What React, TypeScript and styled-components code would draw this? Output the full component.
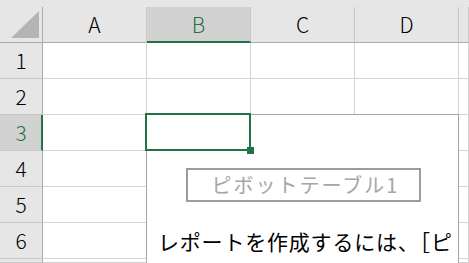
import React from "react";
import styled, { createGlobalStyle } from "styled-components";

const Global = createGlobalStyle`
  html, body { margin: 0; padding: 0; background: #fff; }
  body { font-family: "Noto Sans CJK JP", "Noto Sans", sans-serif; }
`;

const GREEN = "#217346";

const Page = styled.div`
  width: 469px;
  height: 263px;
  overflow: hidden;
  background: #fff;
  display: flex;
  flex-direction: column;
`;

const TopStrip = styled.div`
  height: 7px;
  flex: none;
  background: #e6e6e6;
`;

const Sheet = styled.div`
  flex: 1;
  display: grid;
  grid-template-columns: 43px repeat(4, 104px) 1fr;
  grid-template-rows: repeat(7, 36px) 1fr;
  position: relative;
`;

const Corner = styled.div`
  background: #e6e6e6;
  border-right: 1px solid #ababab;
  border-bottom: 1px solid #ababab;
  box-sizing: border-box;
  svg { display: block; }
`;

const ColHeader = styled.div<{ $sel?: boolean }>`
  box-sizing: border-box;
  background: ${(p) => (p.$sel ? "#d2d2d2" : "#e6e6e6")};
  border-right: 1px solid #c8c8c8;
  border-bottom: ${(p) => (p.$sel ? `2px solid ${GREEN}` : "1px solid #ababab")};
  color: ${(p) => (p.$sel ? GREEN : "#000")};
  font-family: "Noto Sans CJK JP", "Noto Sans", sans-serif;
  font-weight: 300;
  font-size: 21px;
  display: flex;
  align-items: center;
  justify-content: center;
  padding-top: ${(p) => (p.$sel ? "1px" : "0")};
  line-height: 1;
`;

const RowHeader = styled.div<{ $sel?: boolean }>`
  box-sizing: border-box;
  background: ${(p) => (p.$sel ? "#d2d2d2" : "#e6e6e6")};
  border-right: ${(p) => (p.$sel ? `2px solid ${GREEN}` : "1px solid #ababab")};
  border-bottom: 1px solid #c8c8c8;
  color: ${(p) => (p.$sel ? GREEN : "#000")};
  font-family: "Noto Sans CJK JP", "Noto Sans", sans-serif;
  font-weight: 300;
  font-size: 21px;
  display: flex;
  align-items: center;
  justify-content: center;
  padding-left: ${(p) => (p.$sel ? "1px" : "0")};
  line-height: 1;
`;

const Cell = styled.div`
  box-sizing: border-box;
  border-right: 1px solid #d4d4d4;
  border-bottom: 1px solid #d4d4d4;
  background: #fff;
`;

const Pivot = styled.div`
  grid-column: 3 / 6;
  grid-row: 4 / 9;
  margin-left: -1px;
  margin-top: -1px;
  border-left: 1px solid #a6a6a6;
  border-top: 1px solid #a6a6a6;
  border-right: 1px solid #a6a6a6;
  background: #fff;
  z-index: 1;
  overflow: hidden;
  display: flex;
  flex-direction: column;
  align-items: flex-start;
  padding: 53px 0 0 39px;
  box-sizing: border-box;
`;

const PivotTitle = styled.div`
  box-sizing: border-box;
  width: 235px;
  height: 34px;
  border: 2px solid #9c9c9c;
  color: #a6a6a6;
  font-family: "Noto Sans CJK JP", sans-serif;
  font-size: 20px;
  display: flex;
  align-items: center;
  justify-content: center;
  letter-spacing: 2px;
  padding-left: 4px;
  line-height: 1;
`;

const PivotBody = styled.div`
  margin: 29px 0 0 -28px;
  white-space: nowrap;
  color: #000;
  font-family: "Noto Sans CJK JP", sans-serif;
  font-size: 21px;
  letter-spacing: 0.8px;
  line-height: 1;
`;

const Selection = styled.div`
  grid-column: 3;
  grid-row: 4;
  margin: -2px 0 0 -2px;
  border: 2px solid ${GREEN};
  z-index: 2;
  position: relative;
  box-sizing: border-box;
`;

const Handle = styled.span`
  position: absolute;
  right: -5px;
  bottom: -5px;
  width: 7px;
  height: 7px;
  background: ${GREEN};
`;

const cols = ["A", "B", "C", "D", "E"];

export default function App() {
  const rows = [1, 2, 3, 4, 5, 6, 7];
  return (
    <Page>
      <Global />
      <TopStrip />
      <Sheet>
        <Corner>
          <svg width="42" height="35" viewBox="0 0 42 35">
            <polygon points="39,4 39,31 11,31" fill="#b4b4b4" />
          </svg>
        </Corner>
        {cols.map((c) => (
          <ColHeader key={c} $sel={c === "B"}>
            {c === "E" ? "" : c}
          </ColHeader>
        ))}
        <Pivot>
          <PivotTitle>ピボットテーブル1</PivotTitle>
          <PivotBody>レポートを作成するには、［ピ</PivotBody>
        </Pivot>
        <Selection>
          <Handle />
        </Selection>
        {rows.map((r) => (
          <React.Fragment key={r}>
            <RowHeader $sel={r === 3}>{r < 7 ? r : ""}</RowHeader>
            {r <= 2
              ? cols.map((c) => <Cell key={c} />)
              : [<Cell key="A" />, <Cell key="E" />]}
          </React.Fragment>
        ))}
      </Sheet>
    </Page>
  );
}
